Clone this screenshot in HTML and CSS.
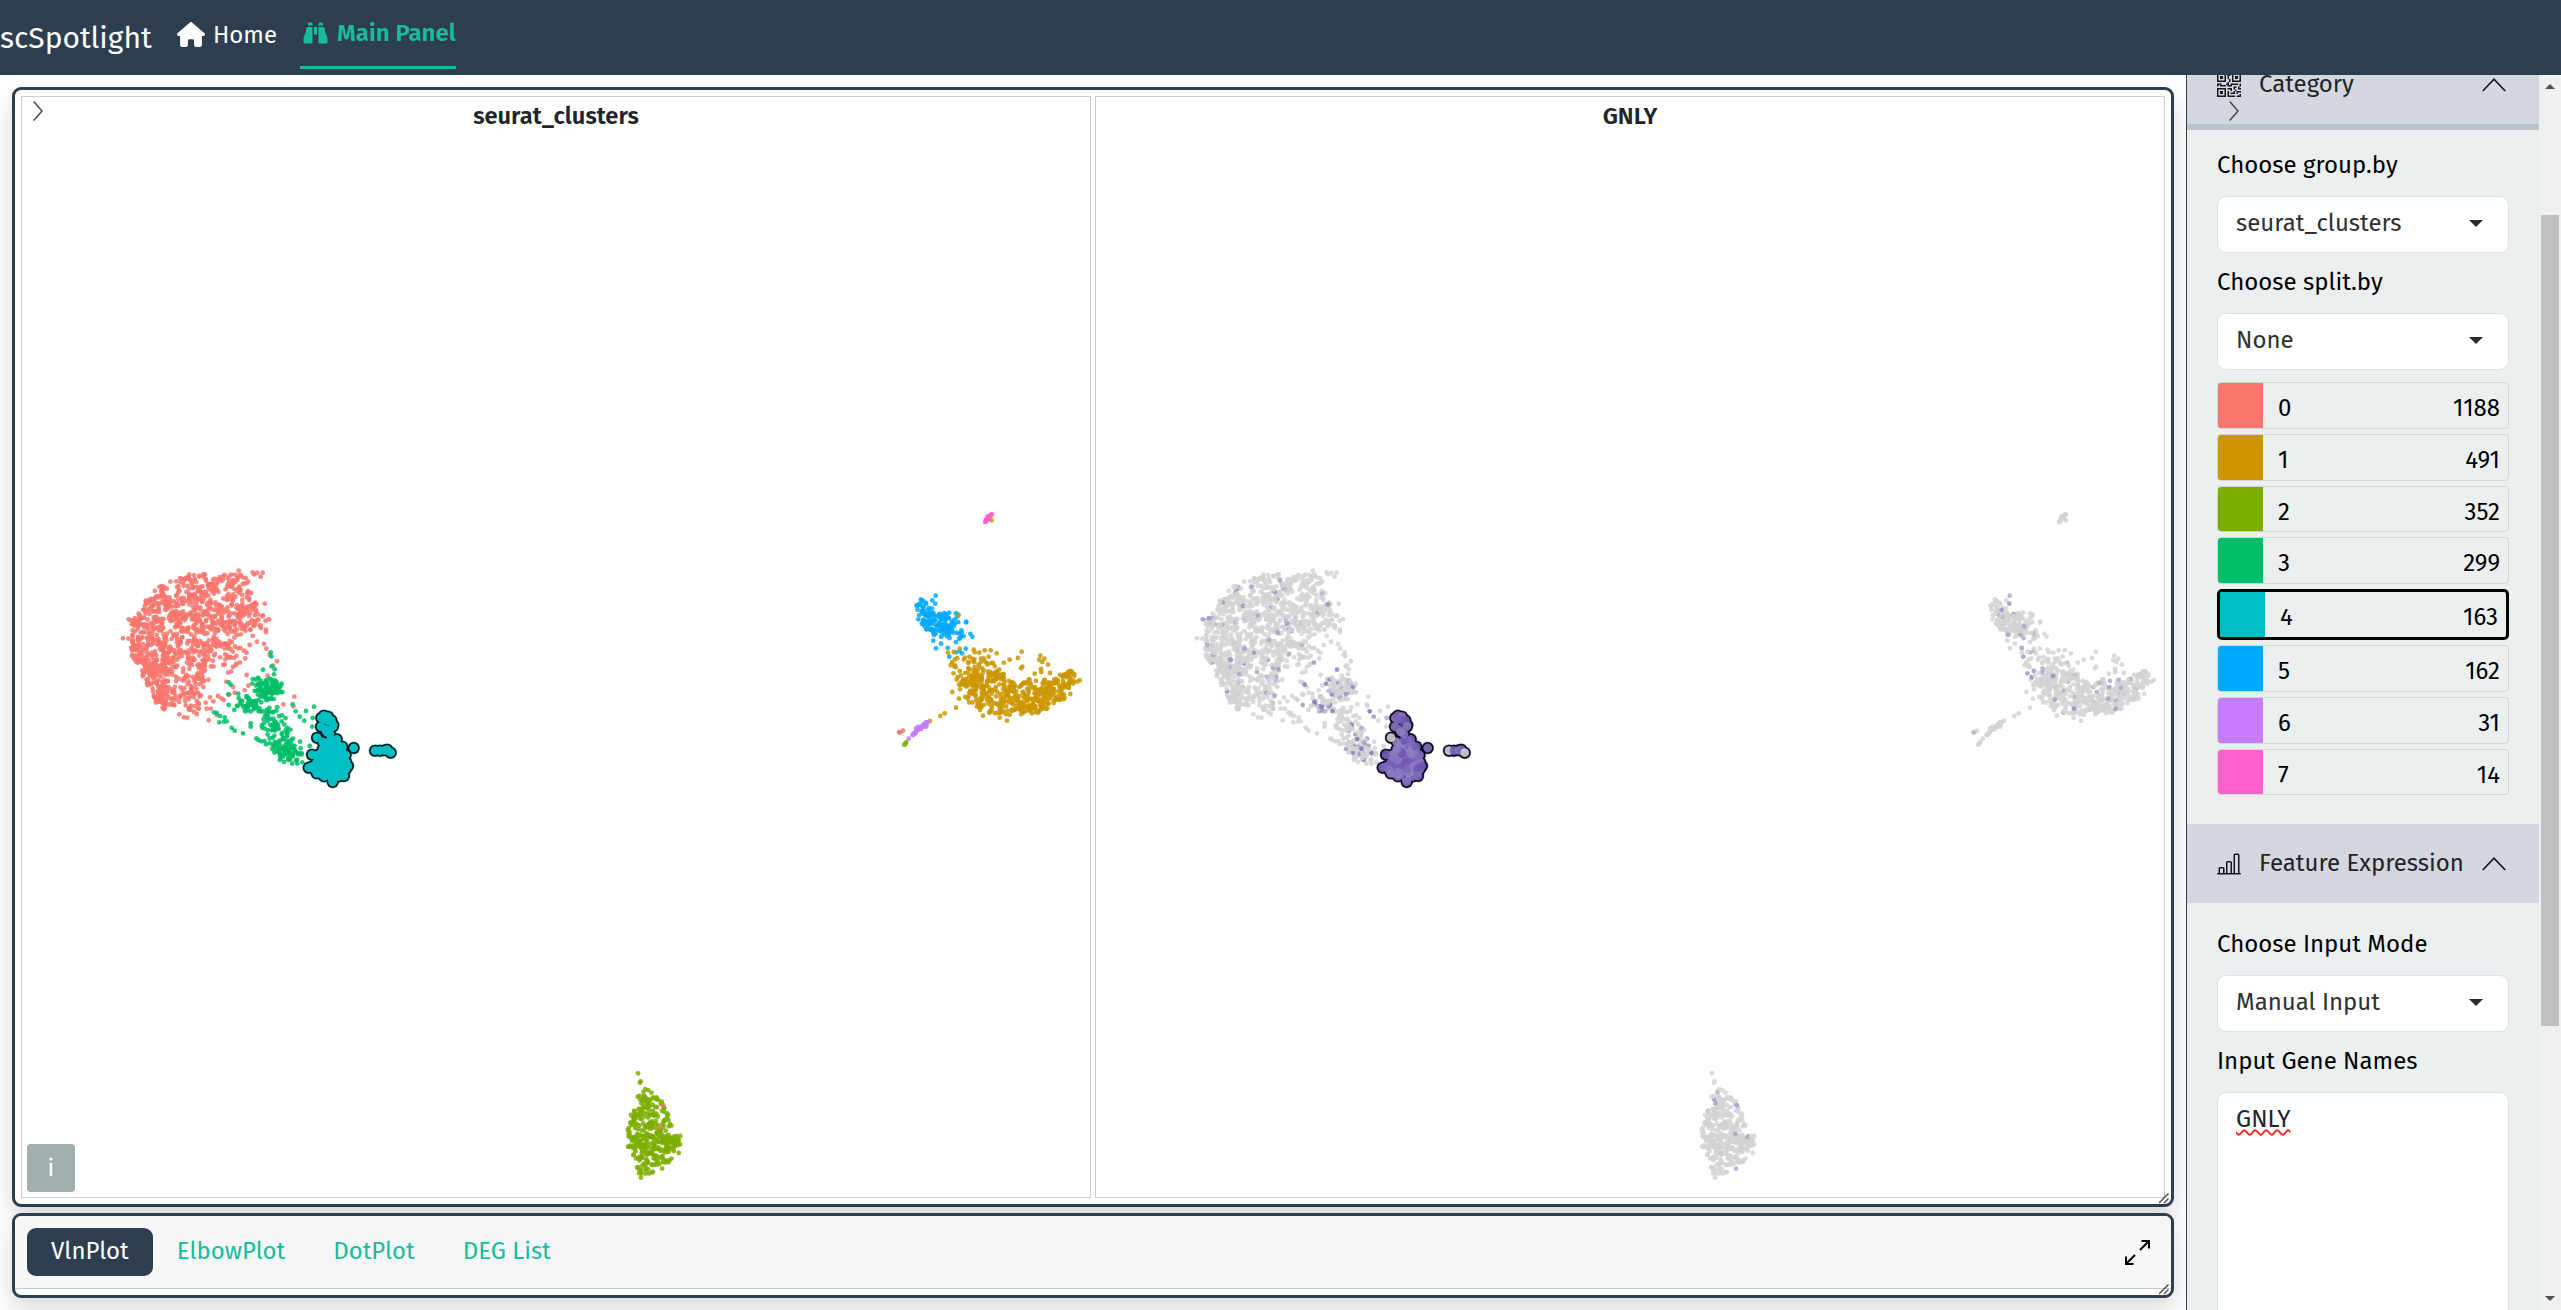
FILE: index.html
```html
<!DOCTYPE html>
<html lang="en">
<head>
<meta charset="utf-8">
<title>scSpotlight</title>
<link rel="stylesheet" href="styles.css">
</head>
<body>
<nav class="navbar">
  <span class="brand">scSpotlight</span>
  <a class="nav-item"><svg class="ico-home" viewBox="0 0 576 512"><path d="M575.8 255.5c0 18-15 32.1-32 32.1l-32 0 .7 160.2c0 2.7-.2 5.4-.5 8.1l0 16.2c0 22.1-17.9 40-40 40l-16 0c-1.1 0-2.2 0-3.3-.1c-1.4 .1-2.8 .1-4.2 .1L416 512l-24 0c-22.1 0-40-17.9-40-40l0-24 0-64c0-17.7-14.3-32-32-32l-64 0c-17.7 0-32 14.3-32 32l0 64 0 24c0 22.1-17.9 40-40 40l-24 0-31.9 0c-1.5 0-3-.1-4.5-.2c-1.2 .1-2.4 .2-3.6 .2l-16 0c-22.1 0-40-17.9-40-40l0-112c0-.9 0-1.9 .1-2.8l0-69.7-32 0c-18 0-32-14-32-32.1c0-9 3-17 10-24L266.4 8c7-7 15-8 22-8s15 2 21 7L564.8 231.5c8 7 12 15 11 24z"/></svg>Home</a>
  <a class="nav-item active"><svg class="ico-bino" viewBox="0 0 512 512"><path d="M128 32l32 0c17.7 0 32 14.3 32 32l0 32L96 96l0-32c0-17.7 14.3-32 32-32zm64 96l0 320c0 17.7-14.3 32-32 32L32 480c-17.7 0-32-14.3-32-32l0-59.1c0-34.6 9.4-68.6 27.2-98.3C40.9 267.8 49.7 242.4 53 216L60.5 156c2-16 15.6-28 31.8-28l99.8 0zm227.8 0c16.1 0 29.8 12 31.8 28L459 216c3.3 26.4 12.1 51.8 25.8 74.6c17.8 29.7 27.2 63.7 27.2 98.3l0 59.1c0 17.7-14.3 32-32 32l-128 0c-17.7 0-32-14.3-32-32l0-320 99.8 0zM320 64c0-17.7 14.3-32 32-32l32 0c17.7 0 32 14.3 32 32l0 32-96 0 0-32zm-32 64l0 160-64 0 0-160 64 0z"/></svg>Main Panel</a>
</nav>
<div class="layout">
  <main class="main">
    <section class="card plots">
      <div class="panel">
        <svg class="scatter" id="clusters"></svg>
        <h2 class="plot-title">seurat_clusters</h2>
        <svg class="toggle-left" viewBox="0 0 10 20"><path d="M.7 .5 9 10 .7 19.5"/></svg>
        <button class="info">i</button>
      </div>
      <div class="panel">
        <svg class="scatter" id="feature"></svg>
        <h2 class="plot-title">GNLY</h2>
      </div>
      <svg class="grip" viewBox="0 0 11 11"><path d="M0 10 9.500 .5M5 10 9.500 5.500"/></svg>
    </section>
    <section class="card tabs-card">
      <div class="tabs">
        <a class="tab on">VlnPlot</a><a class="tab">ElbowPlot</a><a class="tab">DotPlot</a><a class="tab">DEG List</a>
        <svg class="expand" viewBox="0 0 25 25"><path d="M16.500 1H24V8.500M24 1 15 10M8.500 24H1V16.500M1 24 10 15"/></svg>
      </div>
      <svg class="grip" viewBox="0 0 11 11"><path d="M0 10 9.500 .5M5 10 9.500 5.500"/></svg>
    </section>
  </main>
  <aside class="sidebar">
    <div class="side-content">
      <header class="acc-head first"><svg class="acc-ico" viewBox="0 0 16 16"><path d="M2 2h2v2H2V2Z"/><path d="M6 0v6H0V0h6ZM5 1H1v4h4V1ZM4 12H2v2h2v-2Z"/><path d="M6 10v6H0v-6h6Zm-5 1v4h4v-4H1Zm11-9h2v2h-2V2Z"/><path d="M10 0v6h6V0h-6Zm5 1v4h-4V1h4ZM8 1V0h1v2H8v2H7V1h1Zm0 5V4h1v2H8ZM6 8V7h1V6h1v2h1V7h5v1h-4v1H7V8H6Zm0 0v1H2V8H1v1H0V7h3v1h3Zm10 1h-1V7h1v2Zm-1 0h-1v2h2v-1h-1V9Zm-4 0h2v1h-1v1h-1V9Zm2 3v-1h-1v1h-1v1H9v1h3v-2h1Zm0 0h3v1h-2v1h-1v-2Zm-4-1v1h1v-2H7v1h2Z"/><path d="M7 12h1v3h4v1H7v-4Zm9 2v2h-3v-1h2v-1h1Z"/></svg><span>Category</span><svg class="chev" viewBox="0 0 24 14"><path d="M.8 13 12 1.200 23.200 13"/></svg></header>
      <div class="acc-body">
        <label class="label">Choose group.by</label>
        <div class="select">seurat_clusters<i class="caret"></i></div>
        <label class="label">Choose split.by</label>
        <div class="select">None<i class="caret"></i></div>
        <ul class="legend">
          <li class="c0"><b></b><span>0</span><em>1188</em></li>
          <li class="c1"><b></b><span>1</span><em>491</em></li>
          <li class="c2"><b></b><span>2</span><em>352</em></li>
          <li class="c3"><b></b><span>3</span><em>299</em></li>
          <li class="c4 picked"><b></b><span>4</span><em>163</em></li>
          <li class="c5"><b></b><span>5</span><em>162</em></li>
          <li class="c6"><b></b><span>6</span><em>31</em></li>
          <li class="c7"><b></b><span>7</span><em>14</em></li>
        </ul>
      </div>
      <header class="acc-head"><svg class="acc-ico" viewBox="0 0 16 16"><path d="M11 2a1 1 0 0 1 1-1h2a1 1 0 0 1 1 1v12h.5a.5.5 0 0 1 0 1H.5a.5.5 0 0 1 0-1H1v-3a1 1 0 0 1 1-1h2a1 1 0 0 1 1 1v3h1V7a1 1 0 0 1 1-1h2a1 1 0 0 1 1 1v7h1V2zm1 12h2V2h-2v12zm-3 0V7H7v7h2zm-5 0v-3H2v3h2z"/></svg><span>Feature Expression</span><svg class="chev" viewBox="0 0 24 14"><path d="M.8 13 12 1.200 23.200 13"/></svg></header>
      <div class="acc-body">
        <label class="label">Choose Input Mode</label>
        <div class="select">Manual Input<i class="caret"></i></div>
        <label class="label">Input Gene Names</label>
        <div class="select genes"><span class="misspelt">GNLY</span></div>
      </div>
      <svg class="toggle-right" viewBox="0 0 10 20"><path d="M.7 .5 9 10 .7 19.500"/></svg>
    </div>
    <div class="scrollbar"><i class="up"></i><i class="thumb"></i><i class="down"></i></div>
  </aside>
</div>
<script src="scatter.js"></script>
</body>
</html>
```
FILE: styles.css
```css
* { box-sizing: border-box; }
body {
  margin: 0;
  height: 1310px;
  overflow: hidden;
  display: flex;
  flex-direction: column;
  background: #fff;
  color: #212529;
  font: 400 24px/36px "Fira Sans", "Noto Sans", sans-serif;
}
.navbar {
  flex: none;
  height: 75px;
  background: #2c3e50;
  color: #fff;
  display: flex;
  align-items: flex-start;
  position: relative;
  z-index: 3;
}
.brand { width: 177px; padding-top: 20px; font-size: 30px; }
.nav-item {
  display: flex;
  align-items: center;
  height: 69px;
  line-height: 70px;
}
.nav-item svg { fill: currentColor; margin-right: 8px; }
.ico-home { width: 28px; height: 25px; }
.nav-item .ico-bino { width: 25px; height: 24px; margin-right: 9px; }
.active {
  margin-left: 23px;
  width: 156px;
  padding-left: 3px;
  border-bottom: 3px solid #18bc9c;
  color: #18bc9c;
  font-weight: 600;
  line-height: 69px;
  white-space: nowrap;
}
.layout { flex: 1; min-height: 0; display: flex; }
.main {
  flex: 1;
  padding: 12px;
  display: flex;
  flex-direction: column;
  gap: 6px;
}
.card {
  border: 3px solid #2c3e50;
  border-radius: 9px;
  background: #fff;
  box-shadow: 0 12px 24px rgba(0, 0, 0, .15);
  position: relative;
}
.plots { height: 1120px; padding: 6px; display: flex; gap: 4px; }
.panel { flex: 1; border: 1px solid #ccc; position: relative; }
.scatter { position: absolute; left: 0; top: 0; width: 1068px; height: 1100px; }
.plot-title { margin: 0; padding-top: 1px; text-align: center; font-size: 23.700px; font-weight: 600; line-height: 36px; position: relative; }
.toggle-left { position: absolute; left: 11px; top: 4px; width: 10px; height: 20px; }
.toggle-left path, .toggle-right path { fill: none; stroke: #505050; stroke-width: 1.6; }
.info {
  position: absolute; left: 5px; bottom: 5px;
  width: 48px; height: 48px;
  padding: 0;
  border: 0; border-radius: 4px;
  background: #a0aeae; color: #fff;
  font: inherit;
}
.grip { position: absolute; right: 1px; bottom: 0; width: 11px; height: 11px; }
.grip path { fill: none; stroke: #555; stroke-width: 1.5; }
.tabs-card { height: 85px; overflow: hidden; }
.tabs {
  height: 73px;
  padding: 12px;
  display: flex;
  background: #f7f7f7;
  border-bottom: 1px solid #c8c8cb;
}
.tab { height: 48px; padding: 5px 24px; border-radius: 9px; color: #18bc9c; }
.tab.on { background: #2c3e50; color: #fff; }
.expand { width: 25px; height: 25px; margin: 12px 9px 0 auto; fill: none; stroke: #000; stroke-width: 2; }
.sidebar { width: 375px; display: flex; border-left: 1px solid #2c3e50; }
.side-content { width: 352px; background: #ebeff0; overflow: hidden; position: relative; }
.acc-head {
  height: 79px;
  padding: 0 33px 0 30px;
  display: flex;
  align-items: center;
  background: #d4d7dd;
}
.acc-head.first { margin-top: -30px; box-shadow: 0 6px 0 #bbc3cb; }
.acc-ico { width: 24px; height: 24px; margin-right: 18px; fill: #17191f; }
.acc-head span { flex: 1; white-space: nowrap; line-height: 35px; padding-bottom: 1px; }
.chev { width: 24px; height: 14px; }
.chev path { fill: none; stroke: #17191f; stroke-width: 1.7; }
.acc-body { padding: 23px 30px 28.750px; }
.label { display: block; margin-bottom: 13px; color: #000; }
.select {
  height: 57px;
  width: 292px;
  margin-bottom: 11px;
  padding: 8px 18px;
  border: 1px solid #dee2e6;
  border-radius: 9px;
  background: #fff;
  color: #303030;
  display: flex;
  justify-content: space-between;
}
.caret { margin: 15px 7px 0 0; width: 14px; height: 7px; background: #2a2a2a; clip-path: polygon(0 0, 100% 0, 50% 100%); }
.genes { height: 260px; }
.misspelt { color: #212529; text-decoration: underline wavy #f22 1.5px; text-underline-offset: 2px; text-decoration-skip-ink: none; }
.legend { list-style: none; margin: 12px 0 0; padding: 0; display: flex; flex-direction: column; gap: 5px; width: 292px; }
.legend li {
  height: 46.750px;
  display: flex;
  border: 1px solid #d3d5d7;
  border-radius: 4px;
  color: #000;
  overflow: hidden;
  line-height: 50px;
}
.legend b { width: 45px; background: var(--c); }
.legend span { flex: 1; padding-left: 15px; }
.legend em { font-style: normal; padding-right: 8px; }
.legend .picked { height: 51px; border: 3px solid #000; border-radius: 5px; }
.c0 { --c: #f8766d; } .c1 { --c: #cd9600; } .c2 { --c: #7cae00; } .c3 { --c: #00be67; }
.c4 { --c: #00bfc4; } .c5 { --c: #00a9ff; } .c6 { --c: #c77cff; } .c7 { --c: #ff61cc; }
.toggle-right { position: absolute; left: 42px; top: 26px; width: 10px; height: 20px; }
.scrollbar { width: 22px; background: #f0f0f0; display: flex; flex-direction: column; align-items: center; padding: 9px 0; }
.up, .down { width: 10px; height: 5px; background: #505050; clip-path: polygon(50% 0, 100% 100%, 0 100%); }
.down { clip-path: polygon(0 0, 100% 0, 50% 100%); margin-top: auto; }
.thumb { width: 18px; height: 811px; margin-top: 126px; background: #c1c1c1; }
```
FILE: scatter.js
```js
// Seeded generator so the embedding is laid out identically on every load.
let seed = 20240;
const rnd = () => {
  seed = (seed + 0x6D2B79F5) | 0;
  let t = Math.imul(seed ^ (seed >>> 15), 1 | seed);
  t = (t + Math.imul(t ^ (t >>> 7), 61 | t)) ^ t;
  return ((t ^ (t >>> 14)) >>> 0) / 4294967296;
};
const gauss = () => Math.sqrt(-2 * Math.log(1 - rnd())) * Math.cos(6.2832 * rnd());

const COLORS = ['#f8766d', '#cd9600', '#7cae00', '#00be67', '#00bfc4', '#00a9ff', '#c77cff', '#ff61cc'];
const cells = [];

// Regions are digitised on a 3x grid; each has its own origin in plot space.
const A = [78, 443], B = [858, 393], C = [578, 953];
const add = (k, o, x, y) => cells.push({ k, x: o[0] + x / 3, y: o[1] + y / 3 });
const inside = (p, x, y) => {
  let r = false;
  for (let i = 0, j = p.length - 1; i < p.length; j = i++) {
    if ((p[i][1] > y) !== (p[j][1] > y) &&
        x < (p[j][0] - p[i][0]) * (y - p[i][1]) / (p[j][1] - p[i][1]) + p[i][0]) r = !r;
  }
  return r;
};
const fill = (k, o, n, p) => {
  const xs = p.map(q => q[0]), ys = p.map(q => q[1]);
  const x0 = Math.min(...xs), x1 = Math.max(...xs), y0 = Math.min(...ys), y1 = Math.max(...ys);
  while (n > 0) {
    const x = x0 + rnd() * (x1 - x0), y = y0 + rnd() * (y1 - y0);
    if (inside(p, x, y)) { add(k, o, x, y); n--; }
  }
};
const blob = (k, o, n, x, y, sx, sy) => {
  while (n > 0) {
    const a = gauss(), b = gauss();
    if (a * a + b * b < 4.5) { add(k, o, x + a * sx, y + b * sy); n--; }
  }
};
const line = (k, o, n, x0, y0, x1, y1, w) => {
  for (let i = 0; i < n; i++) {
    const t = (i + rnd()) / n, s = w * Math.sin(Math.PI * t);
    add(k, o, x0 + t * (x1 - x0) + gauss() * s, y0 + t * (y1 - y0) + gauss() * s);
  }
};
const list = (k, o, pts) => pts.forEach(p => add(k, o, p[0], p[1]));

fill(0, A, 810, [[80,290],[86,240],[120,205],[145,168],[185,132],[260,106],[340,100],[435,105],[458,145],[470,190],[482,225],[460,265],[420,290],[390,318],[330,325],[250,345],[215,400],[165,400],[120,380],[97,350]]);
fill(0, A, 170, [[125,385],[235,330],[330,320],[310,430],[255,480],[215,500],[185,512],[150,470],[130,420]]);
fill(0, A, 70, [[90,345],[150,370],[210,480],[190,510],[155,465],[125,400]]);
fill(0, A, 60, [[310,330],[430,300],[445,355],[395,400],[350,405],[310,450],[250,470],[300,380]]);
fill(0, A, 26, [[250,460],[300,440],[310,485],[290,520],[235,528]]);
fill(0, A, 16, [[430,170],[465,190],[505,235],[502,285],[450,290]]);
list(0, A, [[69,295],[86,238],[458,97],[462,103],[472,99],[482,110],[488,98],[416,92],[268,104],[494,191],[507,238],[489,226],[498,276],[449,315],[471,305],[492,312],[499,326],[509,344],[531,364],[519,376],[440,405],[503,407],[445,437],[434,451],[399,441],[379,425],[404,458],[388,464],[583,470],[580,499],[550,493],[350,525],[326,541],[320,506],[332,506],[340,484],[354,468],[364,475],[330,472],[371,480],[317,488],[290,522],[238,523],[262,533],[252,532]]);
fill(3, A, 20, [[440,420],[490,410],[550,435],[545,480],[490,480]]);
blob(3, A, 70, 508, 447, 21, 16);
blob(3, A, 44, 447, 490, 26, 15);
blob(3, A, 34, 512, 530, 22, 20);
blob(3, A, 52, 540, 590, 25, 22);
blob(3, A, 54, 568, 640, 22, 16);
list(3, A, [[512,337],[514,349],[515,379],[524,388],[522,403],[489,389],[473,414],[386,427],[392,434],[385,463],[415,461],[386,495],[403,510],[350,519],[342,517],[360,528],[374,532],[380,544],[358,547],[372,545],[395,564],[404,572],[429,580],[452,550],[452,560],[469,595],[475,600],[484,604],[498,613],[578,493],[587,514],[599,530],[613,542],[618,513],[642,500],[638,534],[637,560],[600,605],[629,618],[605,640],[592,671],[607,667]]);

fill(5, B, 118, [[105,350],[125,325],[155,350],[205,375],[225,400],[215,435],[185,445],[140,425],[112,385]]);
fill(5, B, 32, [[180,355],[212,360],[265,388],[255,410],[278,440],[245,460],[205,470],[180,440]]);
list(5, B, [[167,317],[157,331],[166,341],[160,452],[168,475],[183,461],[203,474],[208,500],[228,487],[240,483],[246,490],[257,476]]);
fill(1, B, 90, [[205,515],[240,490],[290,495],[330,510],[380,555],[300,590],[235,590]]);
fill(1, B, 400, [[232,575],[280,550],[370,545],[415,585],[440,565],[490,570],[545,560],[570,560],[570,605],[540,640],[490,665],[430,677],[330,672],[265,640]]);
fill(1, B, 25, [[540,560],[570,536],[600,570],[575,590]]);
list(1, B, [[235,377],[239,476],[204,488],[221,486],[281,479],[284,487],[298,488],[314,481],[332,481],[350,490],[326,500],[425,485],[414,504],[389,509],[371,518],[481,497],[478,510],[493,506],[487,516],[504,524],[427,530],[423,535],[483,537],[484,546],[510,549],[464,551],[540,555],[217,606],[237,626],[228,653],[240,598],[194,670],[181,678],[150,693],[300,660],[309,677],[359,683],[381,692],[335,91],[571,612],[599,571]]);
line(7, B, 14, 315, 97, 336, 72, 3);
line(6, B, 31, 97, 735, 143, 696, 5);
list(6, B, [[86,746]]);
list(0, B, [[57,727],[61,727],[69,722]]);
list(2, B, [[73,764],[76,762],[79,757]]);

fill(2, C, 310, [[135,112],[160,128],[182,148],[203,190],[212,230],[240,260],[236,290],[210,345],[160,368],[122,382],[108,370],[110,330],[83,290],[84,215],[97,188],[118,165],[117,130]]);
fill(2, C, 40, [[85,240],[240,255],[230,300],[90,290]]);
list(2, C, [[114,70],[120,98],[122,94],[113,140],[185,155],[202,190],[214,227],[241,258],[240,283],[236,309],[93,195],[83,240],[84,290],[123,383]]);
list(0, C, [[188,166],[180,230]]);

// Cluster 4 is the highlighted selection, outlined as one merged shape.
const start = cells.length;
fill(4, A, 115, [[690,602],[706,602],[722,622],[735,645],[741,680],[730,703],[700,722],[667,705],[645,692],[632,680],[654,665],[640,643],[667,630],[670,612]]);
list(4, A, [[690,602],[710,598],[727,620],[737,645],[744,678],[732,708],[698,726],[672,709],[650,700],[626,683],[636,644],[668,628],[668,606],[664,534],[672,527],[684,530],[694,541],[700,555],[684,542],[672,537],[663,560],[676,568],[690,582],[680,576],[698,560],[651,593],[761,624],[825,632],[840,632],[855,631],[862,629],[872,638]]);
const selected = cells.splice(start);

const dot = (c, r, f, o) => `<circle cx="${c.x.toFixed(1)}" cy="${c.y.toFixed(1)}" r="${r}" fill="${f}"${o ? ` opacity="${o}"` : ''}/>`;
const mix = t => {
  const a = [211, 211, 211], b = [106, 81, 181];
  return 'rgb(' + a.map((v, i) => Math.round(v + (b[i] - v) * t)).join(',') + ')';
};
const HIT = [.07, .05, .03, .2, 1, .1, .03, 0];

let left = '', right = '';
for (const c of cells) {
  left += dot(c, 2.4, COLORS[c.k], .85);
  const t = rnd() < HIT[c.k] ? .25 + rnd() * (c.k === 3 ? .5 : .3) : 0;
  right += dot(c, 2.4, mix(t), .85);
}
selected.forEach(c => {
  const y = c.y - A[1], x = c.x - A[0];
  const grey = (Math.abs(x - 217) < 1 && Math.abs(y - 197.7) < 1) || x > 289 || rnd() < .04;
  c.f = mix(grey ? .03 : .62 + rnd() * .35);
});
for (const c of selected) { left += dot(c, 6.5, '#5fd0d4'); right += dot(c, 6.5, '#a99de0'); }
for (const c of selected) { left += dot(c, 6, '#021416'); right += dot(c, 6, '#0b0716'); }
for (const c of selected) { left += dot(c, 4.4, COLORS[4]); right += dot(c, 4.4, c.f, .9); }
document.getElementById('clusters').innerHTML = left;
document.getElementById('feature').innerHTML = right;
```
